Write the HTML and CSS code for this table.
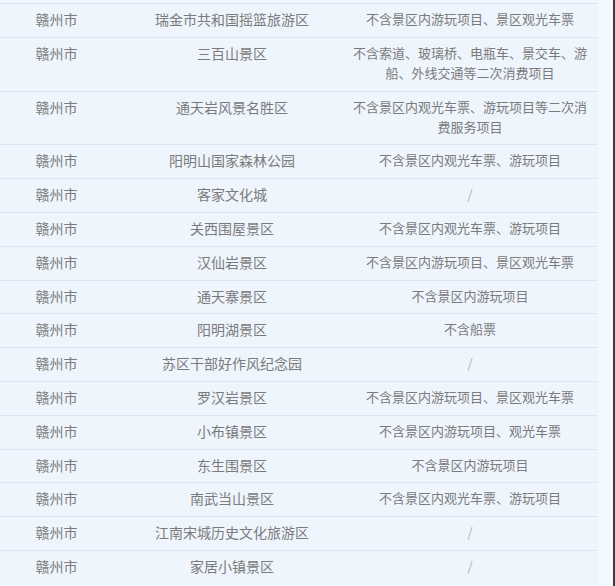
FILE: index.html
```html
<!DOCTYPE html>
<html lang="zh-CN">
<head>
<meta charset="utf-8">
<link rel="stylesheet" href="styles.css">
</head>
<body>
<div class="page">
  <div class="table">
    <div class="row"><div class="c1">赣州市</div><div class="c2">瑞金市共和国摇篮旅游区</div><div class="c3">不含景区内游玩项目、景区观光车票</div></div>
    <div class="row"><div class="c1">赣州市</div><div class="c2">三百山景区</div><div class="c3">不含索道、玻璃桥、电瓶车、景交车、游船、外线交通等二次消费项目</div></div>
    <div class="row"><div class="c1">赣州市</div><div class="c2">通天岩风景名胜区</div><div class="c3">不含景区内观光车票、游玩项目等二次消费服务项目</div></div>
    <div class="row"><div class="c1">赣州市</div><div class="c2">阳明山国家森林公园</div><div class="c3">不含景区内观光车票、游玩项目</div></div>
    <div class="row"><div class="c1">赣州市</div><div class="c2">客家文化城</div><div class="c3 slash">/</div></div>
    <div class="row"><div class="c1">赣州市</div><div class="c2">关西围屋景区</div><div class="c3">不含景区内观光车票、游玩项目</div></div>
    <div class="row"><div class="c1">赣州市</div><div class="c2">汉仙岩景区</div><div class="c3">不含景区内游玩项目、景区观光车票</div></div>
    <div class="row"><div class="c1">赣州市</div><div class="c2">通天寨景区</div><div class="c3">不含景区内游玩项目</div></div>
    <div class="row"><div class="c1">赣州市</div><div class="c2">阳明湖景区</div><div class="c3">不含船票</div></div>
    <div class="row"><div class="c1">赣州市</div><div class="c2">苏区干部好作风纪念园</div><div class="c3 slash">/</div></div>
    <div class="row"><div class="c1">赣州市</div><div class="c2">罗汉岩景区</div><div class="c3">不含景区内游玩项目、景区观光车票</div></div>
    <div class="row"><div class="c1">赣州市</div><div class="c2">小布镇景区</div><div class="c3">不含景区内游玩项目、观光车票</div></div>
    <div class="row"><div class="c1">赣州市</div><div class="c2">东生围景区</div><div class="c3">不含景区内游玩项目</div></div>
    <div class="row"><div class="c1">赣州市</div><div class="c2">南武当山景区</div><div class="c3">不含景区内观光车票、游玩项目</div></div>
    <div class="row"><div class="c1">赣州市</div><div class="c2">江南宋城历史文化旅游区</div><div class="c3 slash">/</div></div>
    <div class="row"><div class="c1">赣州市</div><div class="c2">家居小镇景区</div><div class="c3 slash">/</div></div>
  </div>
</div>
</body>
</html>
```

FILE: styles.css
```css
html, body {
  margin: 0;
  padding: 0;
  background: #f3f8fe;
  overflow: hidden;
}
.page {
  width: 613px;
  height: 586px;
  border-right: 2px solid #3a3d42;
  background: #f3f8fe;
  overflow: hidden;
}
.table {
  width: 598px;
  padding-top: 3px;
  background: #eef5fd;
  font-family: "Noto Sans CJK SC", "Noto Sans", sans-serif;
  font-size: 13px;
  color: #7b7b7b;
}
.row {
  display: grid;
  grid-template-columns: 113px 238px 238px;
  border-top: 1px solid #d7e6f4;
  text-align: center;
  line-height: 20px;
}
.row > div {
  padding: 5px 0 7.8px;
}
.c1, .c2 {
  font-size: 14px;
}
.slash {
  color: #b0b0b0;
}
```
